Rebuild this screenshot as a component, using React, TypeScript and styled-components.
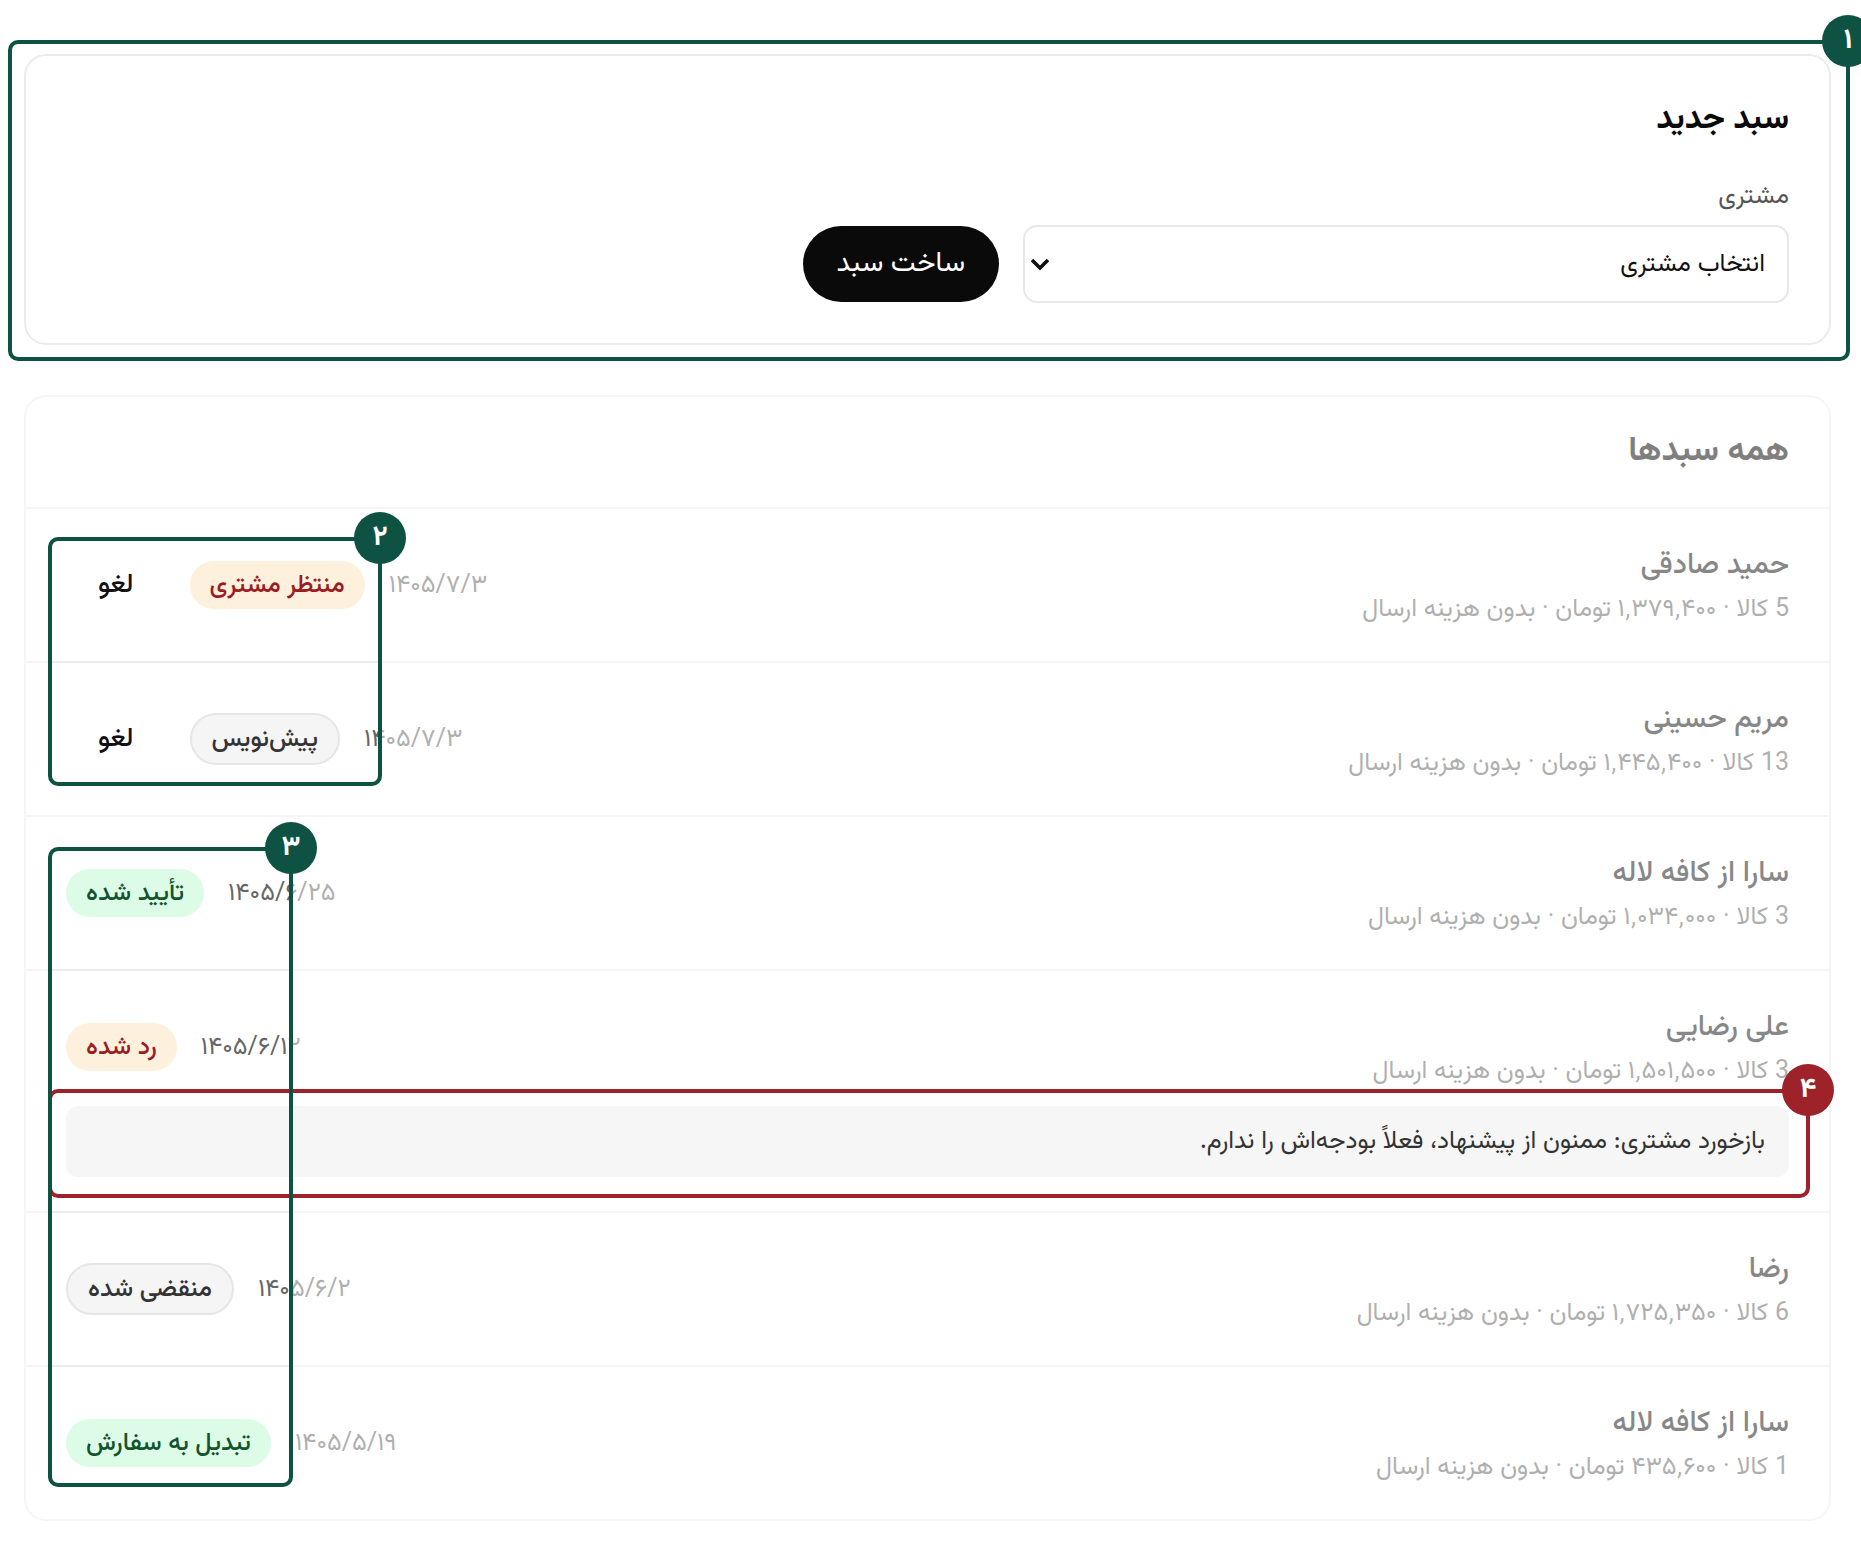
import React from "react";
import styled, { createGlobalStyle, css } from "styled-components";

const GlobalStyle = createGlobalStyle`
  html, body {
    margin: 0;
    padding: 0;
    background: #fff;
    overflow: hidden;
  }
  body {
    font-family: "Vazirmatn", "Noto Sans Arabic", "DejaVu Sans", sans-serif;
    color: #111;
  }
  * {
    box-sizing: border-box;
  }
`;

const Page = styled.div`
  position: relative;
  width: 1861px;
  height: 1541px;
  overflow: hidden;
  padding: 54px 30px 20px 24px;
  display: flex;
  flex-direction: column;
  gap: 50px;
`;

const Card = styled.section`
  background: #fff;
  border: 2px solid #ebebeb;
  border-radius: 22px;
`;

const NewCartCard = styled(Card)`
  padding: 40px;
`;

const CardTitle = styled.h2`
  margin: 0;
  font-size: 33px;
  font-weight: 700;
  line-height: 48px;
  color: #0a0a0a;
`;

const FieldLabel = styled.div`
  margin: 37px 0 12px;
  font-size: 25px;
  line-height: 32px;
  color: #555;
`;

const FormRow = styled.div`
  display: flex;
  align-items: center;
  gap: 24px;
`;

const SelectBox = styled.div`
  width: 766px;
  height: 78px;
  border: 2px solid #e8e8e8;
  border-radius: 14px;
  display: flex;
  align-items: center;
  justify-content: space-between;
  padding: 0 22px 0 4px;
  font-size: 25px;
  color: #111;
`;

const Chevron = () => (
  <svg width="22" height="14" viewBox="0 0 22 14" aria-hidden="true">
    <polyline
      points="3,3 11,11 19,3"
      fill="none"
      stroke="#111"
      strokeWidth="3.6"
      strokeLinejoin="miter"
    />
  </svg>
);

const CreateButton = styled.button`
  height: 76px;
  padding: 0 34px;
  border: none;
  border-radius: 999px;
  background: #0a0a0a;
  color: #fff;
  font-family: inherit;
  font-size: 28px;
`;

const ListHeader = styled.div`
  padding: 32px 40px;
  border-bottom: 2px solid #ebebeb;
`;

const ListTitle = styled.h2`
  margin: 0;
  font-size: 34px;
  font-weight: 700;
  line-height: 46px;
  color: #0a0a0a;
`;

const Row = styled.div`
  padding: 34px 40px;
  border-bottom: 2px solid #ebebeb;
  &:last-child {
    border-bottom: none;
  }
`;

const RowMain = styled.div`
  display: flex;
  align-items: center;
  justify-content: space-between;
`;

const Info = styled.div`
  display: flex;
  flex-direction: column;
  gap: 4px;
`;

const Name = styled.div`
  font-size: 29px;
  font-weight: 500;
  line-height: 46px;
  color: #1a1a1a;
`;

const Meta = styled.div`
  font-size: 25px;
  line-height: 34px;
  color: #666;
`;

const Actions = styled.div`
  display: flex;
  align-items: center;
  gap: 24px;
`;

const DateText = styled.span`
  font-size: 25px;
  color: #666;
`;

type Tone = "warning" | "neutral" | "success";

const toneStyles: Record<Tone, ReturnType<typeof css>> = {
  warning: css`
    background: #fdf0dc;
    color: #9b1c23;
  `,
  neutral: css`
    background: #f5f5f5;
    color: #333;
    border: 2px solid #e6e6e6;
  `,
  success: css`
    background: #dcfce7;
    color: #14532d;
  `,
};

const Badge = styled.span<{ $tone: Tone }>`
  display: inline-flex;
  align-items: center;
  height: ${(p) => (p.$tone === "neutral" ? 52 : 48)}px;
  padding: 0 20px;
  border-radius: 999px;
  font-size: 25px;
  font-weight: 500;
  white-space: nowrap;
  ${(p) => toneStyles[p.$tone]}
`;

const CancelButton = styled.button`
  height: 48px;
  padding: 0 32px;
  border: none;
  background: transparent;
  font-family: inherit;
  font-size: 27px;
  font-weight: 500;
  color: #111;
`;

const Feedback = styled.div`
  margin-top: 17px;
  height: 71px;
  padding: 0 24px;
  display: flex;
  align-items: center;
  background: #f6f6f6;
  border-radius: 12px;
  font-size: 25px;
  color: #333;
`;

/* annotation layer drawn over the screenshot */

const Dim = styled.div`
  position: absolute;
  inset: 0;
  background: rgba(255, 255, 255, 0.48);
  pointer-events: none;
`;

const frameColors = {
  green: "#0e5244",
  red: "#9e2229",
};

type FrameTone = keyof typeof frameColors;

const Frame = styled.div<{ $tone: FrameTone; $x: number; $y: number; $w: number; $h: number }>`
  position: absolute;
  left: ${(p) => p.$x}px;
  top: ${(p) => p.$y}px;
  width: ${(p) => p.$w}px;
  height: ${(p) => p.$h}px;
  border: 4px solid ${(p) => frameColors[p.$tone]};
  border-radius: 10px;
  pointer-events: none;
`;

const Marker = styled.div<{ $tone: FrameTone; $x: number; $y: number }>`
  position: absolute;
  left: ${(p) => p.$x - 26}px;
  top: ${(p) => p.$y - 26}px;
  width: 52px;
  height: 52px;
  border-radius: 50%;
  background: ${(p) => frameColors[p.$tone]};
  color: #fff;
  display: flex;
  align-items: center;
  justify-content: center;
  font-size: 28px;
  font-weight: 700;
`;

type Cart = {
  name: string;
  meta: string;
  date: string;
  status: string;
  tone: Tone;
  cancel?: boolean;
  feedback?: string;
};

const carts: Cart[] = [
  {
    name: "حمید صادقی",
    meta: "5 کالا · ۱٬۳۷۹٬۴۰۰ تومان · بدون هزینه ارسال",
    date: "۱۴۰۵/۷/۳",
    status: "منتظر مشتری",
    tone: "warning",
    cancel: true,
  },
  {
    name: "مریم حسینی",
    meta: "13 کالا · ۱٬۴۴۵٬۴۰۰ تومان · بدون هزینه ارسال",
    date: "۱۴۰۵/۷/۳",
    status: "پیش‌نویس",
    tone: "neutral",
    cancel: true,
  },
  {
    name: "سارا از کافه لاله",
    meta: "3 کالا · ۱٬۰۳۴٬۰۰۰ تومان · بدون هزینه ارسال",
    date: "۱۴۰۵/۶/۲۵",
    status: "تأیید شده",
    tone: "success",
  },
  {
    name: "علی رضایی",
    meta: "3 کالا · ۱٬۵۰۱٬۵۰۰ تومان · بدون هزینه ارسال",
    date: "۱۴۰۵/۶/۱۲",
    status: "رد شده",
    tone: "warning",
    feedback: "بازخورد مشتری: ممنون از پیشنهاد، فعلاً بودجه‌اش را ندارم.",
  },
  {
    name: "رضا",
    meta: "6 کالا · ۱٬۷۲۵٬۳۵۰ تومان · بدون هزینه ارسال",
    date: "۱۴۰۵/۶/۲",
    status: "منقضی شده",
    tone: "neutral",
  },
  {
    name: "سارا از کافه لاله",
    meta: "1 کالا · ۴۳۵٬۶۰۰ تومان · بدون هزینه ارسال",
    date: "۱۴۰۵/۵/۱۹",
    status: "تبدیل به سفارش",
    tone: "success",
  },
];

type Note = { id: string; label: string; tone: FrameTone; x: number; y: number; w: number; h: number };

const notes: Note[] = [
  { id: "n1", label: "۱", tone: "green", x: 8, y: 40, w: 1842, h: 321 },
  { id: "n2", label: "۲", tone: "green", x: 48, y: 537, w: 334, h: 249 },
  { id: "n4", label: "۴", tone: "red", x: 48, y: 1089, w: 1762, h: 109 },
  { id: "n3", label: "۳", tone: "green", x: 48, y: 847, w: 245, h: 640 },
];

// holes of the dim layer; note 4's hole skips the part already open under note 3
const holes = [
  [8, 40, 1842, 321],
  [48, 537, 334, 249],
  [48, 847, 245, 640],
  [293, 1089, 1517, 109],
];

const dimPath =
  "M0 0H1861V1541H0Z " +
  holes.map(([x, y, w, h]) => `M${x} ${y}h${w}v${h}h${-w}Z`).join(" ");

const CartRow = ({ cart }: { cart: Cart }) => (
  <Row>
    <RowMain>
      <Info>
        <Name>{cart.name}</Name>
        <Meta>{cart.meta}</Meta>
      </Info>
      <Actions>
        <DateText>{cart.date}</DateText>
        <Badge $tone={cart.tone}>{cart.status}</Badge>
        {cart.cancel && <CancelButton>لغو</CancelButton>}
      </Actions>
    </RowMain>
    {cart.feedback && <Feedback>{cart.feedback}</Feedback>}
  </Row>
);

const App = () => {
  return (
    <>
      <GlobalStyle />
      <Page dir="rtl">
        <NewCartCard>
          <CardTitle>سبد جدید</CardTitle>
          <FieldLabel>مشتری</FieldLabel>
          <FormRow>
            <SelectBox>
              <span>انتخاب مشتری</span>
              <Chevron />
            </SelectBox>
            <CreateButton>ساخت سبد</CreateButton>
          </FormRow>
        </NewCartCard>

        <Card>
          <ListHeader>
            <ListTitle>همه سبدها</ListTitle>
          </ListHeader>
          {carts.map((cart, i) => (
            <CartRow key={i} cart={cart} />
          ))}
        </Card>

        <Dim style={{ clipPath: `path(evenodd, "${dimPath}")` }} />
        {notes.map((n) => (
          <Frame key={n.id} $tone={n.tone} $x={n.x} $y={n.y} $w={n.w} $h={n.h} />
        ))}
        {notes.map((n) => (
          <Marker key={n.id + "m"} $tone={n.tone} $x={n.x + n.w - 2} $y={n.y + 1}>
            {n.label}
          </Marker>
        ))}
      </Page>
    </>
  );
};

export default App;
